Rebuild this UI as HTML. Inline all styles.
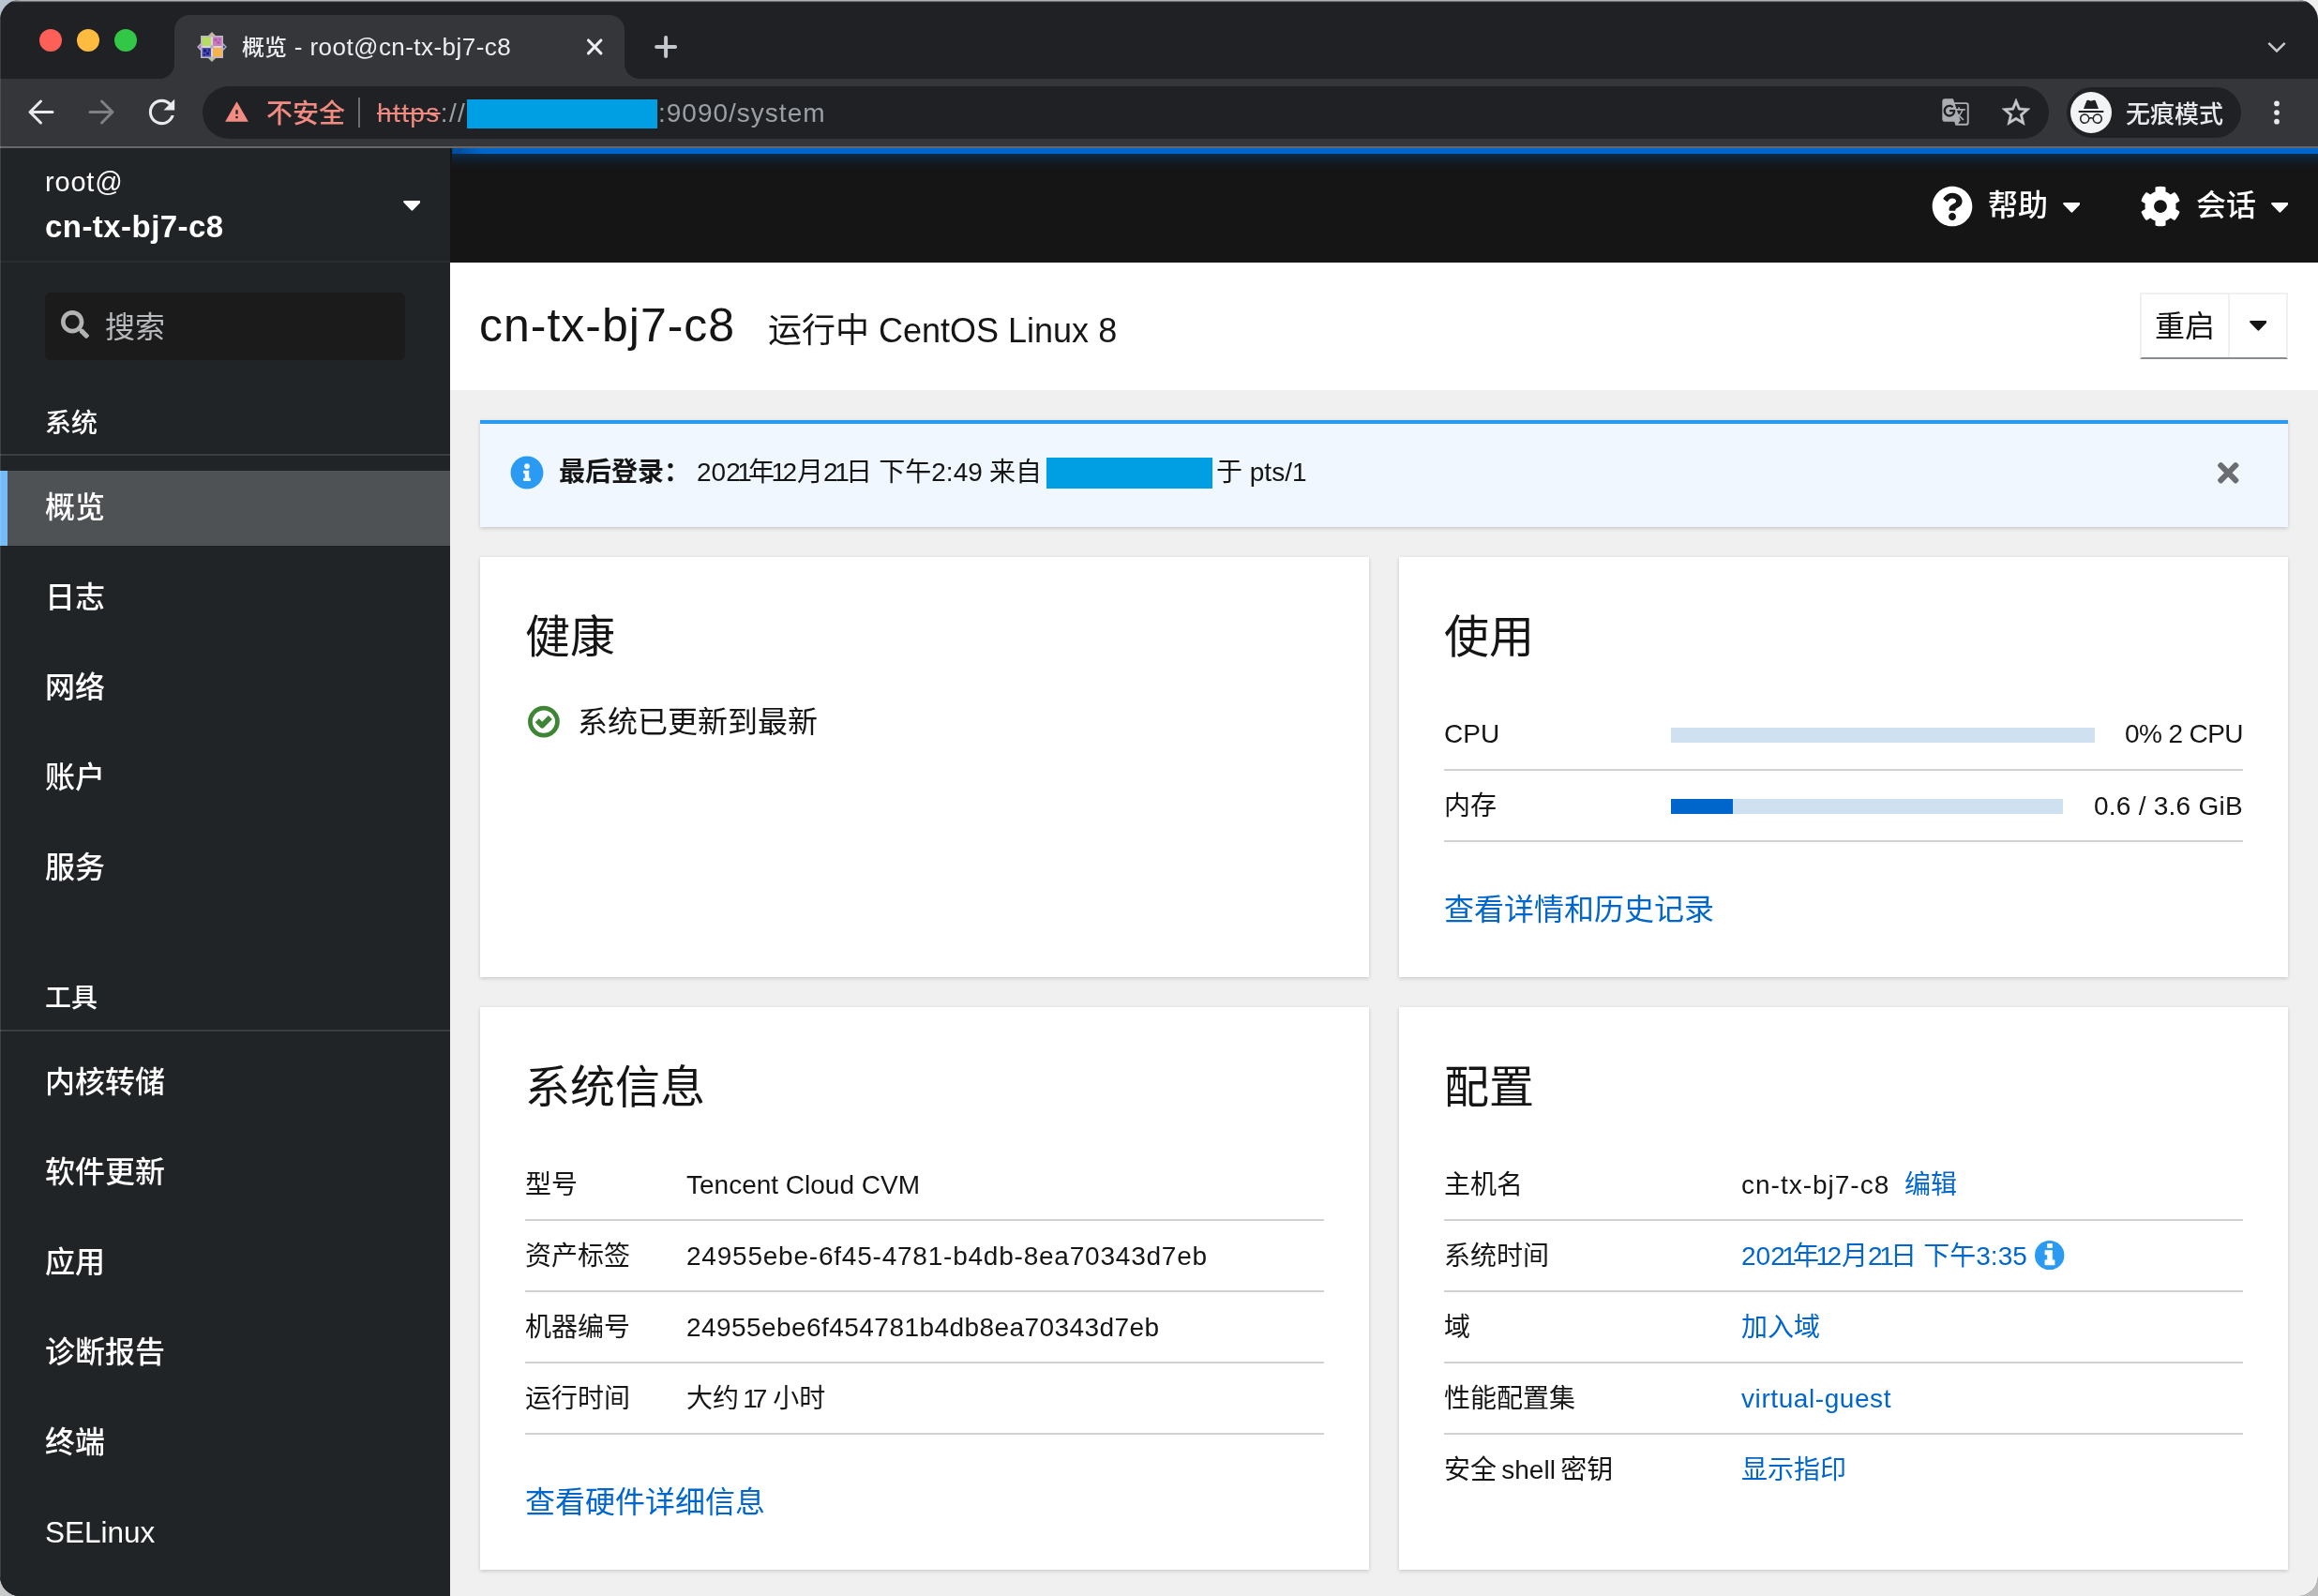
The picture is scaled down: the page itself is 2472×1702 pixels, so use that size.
<!DOCTYPE html>
<html lang="zh-CN">
<head>
<meta charset="utf-8">
<title>概览 - root@cn-tx-bj7-c8</title>
<style>
*{box-sizing:border-box;margin:0;padding:0}
html,body{width:2472px;height:1702px;overflow:hidden}
body{position:relative;background:#c3c6cc;font-family:"Liberation Sans","Noto Sans CJK SC",sans-serif;color:#151515;-webkit-font-smoothing:antialiased}
.abs{position:absolute}
.t{position:absolute;white-space:nowrap;line-height:1;will-change:transform;margin-top:2px}
.c{margin-top:0}
#corner-tl{position:absolute;left:0;top:0;width:60px;height:40px;background:#b9c2d1}
#corner-tr{position:absolute;right:0;top:0;width:60px;height:40px;background:#eeefee}
#corner-br{position:absolute;right:0;bottom:0;width:40px;height:40px;background:#bdbdbd}
#corner-bl{position:absolute;left:0;bottom:0;width:40px;height:40px;background:#c9c9c9}
#win{position:absolute;left:0;top:0;width:2472px;height:1702px;border-radius:21px;overflow:hidden;background:#202124}
#topline{position:absolute;left:0;top:0;width:2472px;height:3px;background:linear-gradient(#afb1b5,#afb1b5 .7px,#5a5b5f 1.700px,#202124 2.600px)}
/* ---------- browser chrome ---------- */
#tab{position:absolute;left:186px;top:16px;width:480px;height:68px;background:#35363a;border-radius:16px 16px 0 0}
#tab:before,#tab:after{content:"";position:absolute;bottom:0;width:16px;height:16px}
#tab:before{left:-16px;background:radial-gradient(circle at 0 0,rgba(53,54,58,0) 15.5px,#35363a 16.5px)}
#tab:after{right:-16px;background:radial-gradient(circle at 100% 0,rgba(53,54,58,0) 15.5px,#35363a 16.5px)}
#toolbar{position:absolute;left:0;top:84px;width:2472px;height:72px;background:#35363a}
#tbline{position:absolute;left:0;top:156px;width:2472px;height:2px;background:#66676b}
#omni{position:absolute;left:216px;top:92px;width:1969px;height:56px;border-radius:28px;background:#202124}
#incog{position:absolute;left:2204px;top:93px;width:186px;height:54px;border-radius:27px;background:#202124}
/* ---------- cockpit ---------- */
#side{position:absolute;left:0;top:158px;width:480px;height:1544px;background:#212427}
#mast{position:absolute;left:480px;top:158px;width:1992px;height:122px;background:#151515}
#main{position:absolute;left:480px;top:280px;width:1992px;height:1422px;background:#f0f0f0}
.nav{color:#fff;font-size:32px;left:48px;font-weight:500;margin-top:1px}
.sec{color:#fff;font-size:28px;left:48px;font-weight:500}
.card{position:absolute;background:#fff;box-shadow:0 2px 4px rgba(3,3,3,.12),0 0 4px rgba(3,3,3,.06)}
.ct{font-size:48px;color:#151515;margin-top:4px}
.lb{font-size:28px;color:#151515}
.lk{color:#0066cc}
.n{letter-spacing:-1.6px}
.o{margin-left:-3.500px;letter-spacing:-3.700px}
.dv{position:absolute;height:2px;background:#d2d2d2}
.hr{position:absolute;left:0;width:480px;height:2px;background:#3c3f42}
</style>
</head>
<body>
<div id="corner-tl"></div><div id="corner-tr"></div><div id="corner-br"></div><div id="corner-bl"></div>
<div id="win">
<div id="topline"></div>
<div class="abs" style="left:0;top:20px;width:1px;height:1662px;background:rgba(255,255,255,.13);z-index:5"></div>
<!--CHROME-->
<!-- traffic lights -->
<div class="abs" style="left:42px;top:31px;width:24px;height:24px;border-radius:50%;background:#fe5f57"></div>
<div class="abs" style="left:82px;top:31px;width:24px;height:24px;border-radius:50%;background:#fdbb40"></div>
<div class="abs" style="left:122px;top:31px;width:24px;height:24px;border-radius:50%;background:#33c748"></div>
<!-- tab -->
<div id="tab"></div>
<svg class="abs" style="left:210px;top:34px" width="32" height="32" viewBox="0 0 32 32">
 <path d="M16 0l5 5H11zM16 32l5-5H11zM0 16l5-5v10zM32 16l-5-5v10z" fill="#b9b3c1"/>
 <path d="M16 1.500l2.500 3.500h-5z" fill="#f6b348"/><path d="M16 30.500l2.500-3.500h-5z" fill="#b4dc5e"/>
 <path d="M1.500 16l3.500-2.500v5z" fill="#c668bd"/><path d="M30.500 16l-3.500-2.500v5z" fill="#3c3f9a"/>
 <rect x="4" y="4" width="24" height="24" fill="#bdb6c6"/>
 <rect x="5.500" y="5.500" width="9.500" height="9.500" fill="#b6de62"/>
 <rect x="17" y="5.500" width="9.500" height="9.500" fill="#c77cc0"/>
 <rect x="5.500" y="17" width="9.500" height="9.500" fill="#4d4fae"/>
 <rect x="17" y="17" width="9.500" height="9.500" fill="#f6b348"/>
 <path d="M7 18.500h3v3H7zM10 21.500h3v3h-3zM12 18.500h2v2h-2zM7 23.500h2v2H7z" fill="#1c1c80"/>
 <path d="M18.500 7h3v3h-3zM21.500 10h3v3h-3zM23.500 7h2v2h-2z" fill="#b25ba8"/>
 <path d="M15 5.500h2v21h-2zM5.500 15h21v2h-21z" fill="#d8d2e2"/>
 <rect x="14.500" y="14.500" width="3" height="3" fill="#b0aeb4"/>
</svg>
<div class="t c" id="tabtitle" style="left:258px;top:37px;font-size:24px;font-weight:500;color:#eceef0">概览<span style="font-size:26px;letter-spacing:.45px"> - root@cn-tx-bj7-c8</span></div>
<svg class="abs" style="left:618px;top:34px" width="32" height="32" viewBox="0 0 32 32"><path fill="none" stroke="#eceef0" stroke-width="3.100" stroke-linecap="round" d="M9.500 9l13.400 13.800M22.900 9L9.500 22.800"/></svg>
<svg class="abs" style="left:690px;top:30px" width="40" height="40" viewBox="0 0 40 40"><path fill="none" stroke="#c4c7cb" stroke-width="4" stroke-linecap="round" d="M20.100 10.100v20M10.100 20.100h20"/></svg>
<svg class="abs" style="left:2410px;top:32px" width="36" height="36" viewBox="0 0 24 24"><path fill="none" stroke="#c4c7cb" stroke-width="1.7" d="M6.2 9.2l5.8 5.8 5.8-5.8"/></svg>
<!-- toolbar -->
<div id="toolbar"></div><div id="tbline"></div>
<svg class="abs" style="left:24px;top:100px" width="40" height="40" viewBox="0 0 40 40"><path fill="none" stroke="#e8eaed" stroke-width="3" stroke-linecap="round" stroke-linejoin="round" d="M32 19.500H8.500M19.500 8L8 19.500 19.500 31"/></svg>
<svg class="abs" style="left:88px;top:100px" width="40" height="40" viewBox="0 0 40 40"><path fill="none" stroke="#7f8185" stroke-width="3" stroke-linecap="round" stroke-linejoin="round" d="M8 19.500h23.500M20.500 8L32 19.500 20.500 31"/></svg>
<svg class="abs" style="left:152px;top:99px" width="41" height="41" viewBox="0 0 24 24"><path fill="#e8eaed" d="M17.650 6.350A7.950 7.950 0 0 0 12 4c-4.420 0-7.990 3.580-7.990 8s3.570 8 7.990 8c3.730 0 6.840-2.550 7.730-6h-1.900c-.85 2.450-3.100 4.200-5.830 4.200-3.420 0-6.200-2.780-6.200-6.200s2.780-6.200 6.200-6.200c1.700 0 3.230.7 4.350 1.850L13.200 10.800H20V4z"/></svg>
<div id="omni"></div>
<svg class="abs" style="left:239px;top:106px" width="27" height="27" viewBox="0 0 24 24"><path fill="#f28b82" d="M1 21h22L12 2 1 21zm12-3h-2v-2h2v2zm0-4h-2v-4h2v4z"/></svg>
<div class="t c" id="insecure" style="left:284px;top:108px;font-size:28px;font-weight:500;color:#f28b82">不安全</div>
<div class="abs" style="left:382px;top:104px;width:2px;height:32px;background:#6b6d71"></div>
<div class="t c" id="url1" style="left:402px;top:107px;font-size:28px;color:#9aa0a6;letter-spacing:1.400px"><span style="color:#f28b82;text-decoration:line-through">https</span>://</div>
<div class="t c" id="url2" style="left:702px;top:107px;font-size:28px;color:#9aa0a6;letter-spacing:1px">:9090/system</div>
<div class="abs" style="left:498px;top:106px;width:203px;height:31px;background:#009fe3"></div>
<!-- translate icon -->
<svg class="abs" style="left:2070px;top:104px" width="31" height="31" viewBox="0 0 24 24"><path fill="#aaadb1" d="M21 4H11l-1-3H3c-1.100 0-2 .9-2 2v15c0 1.100.9 2 2 2h8l1 3h9c1.100 0 2-.9 2-2V6c0-1.100-.9-2-2-2zM7 16c-2.760 0-5-2.240-5-5s2.240-5 5-5c1.350 0 2.480.5 3.350 1.300L9.030 8.570c-.38-.36-1.040-.78-2.030-.78-1.740 0-3.150 1.440-3.150 3.210S5.260 14.210 7 14.210c2.010 0 2.840-1.440 2.920-2.410H7v-1.710h4.680c.07.31.12.61.12 1.020C11.800 13.970 9.890 16 7 16zm6.170-5.420h3.700c-.43 1.250-1.110 2.430-2.050 3.470-.31-.35-.6-.72-.86-1.100l-.79-2.370zm8.330 9.920c0 .55-.45 1-1 1H14l2-2.500-1.040-3.100 3.100 3.100.92-.92-3.300-3.250.02-.02c1.130-1.250 1.930-2.690 2.400-4.220H20v-1.300h-4.530V8h-1.290v1.290h-1.440L11.460 5.500h9.040c.55 0 1 .45 1 1v14z"/></svg>
<!-- star -->
<svg class="abs" style="left:2132px;top:102px" width="36" height="36" viewBox="0 0 24 24"><path fill="#c4c7cb" stroke="#c4c7cb" stroke-width=".3" d="M22 9.240l-7.190-.62L12 2 9.190 8.630 2 9.240l5.460 4.730L5.820 21 12 17.270 18.180 21l-1.630-7.030L22 9.240zM12 15.400l-3.760 2.270 1-4.280-3.320-2.880 4.380-.38L12 6.100l1.710 4.040 4.380.38-3.320 2.880 1 4.280L12 15.400z"/></svg>
<!-- incognito chip -->
<div id="incog"></div>
<div class="abs" style="left:2208px;top:98px;width:44px;height:44px;border-radius:50%;background:#f1f3f4"></div>
<svg class="abs" style="left:2214px;top:104px" width="32" height="32" viewBox="0 0 24 24"><path fill="#202124" d="M17.060 13c-1.860 0-3.420 1.330-3.820 3.100-.95-.41-1.820-.3-2.480-.01C10.350 14.310 8.790 13 6.940 13 4.770 13 3 14.790 3 17s1.770 4 3.940 4c2.060 0 3.740-1.620 3.900-3.680.34-.24 1.230-.69 2.320.02.18 2.050 1.840 3.660 3.900 3.660 2.170 0 3.940-1.790 3.940-4s-1.770-4-3.940-4zM6.940 19.860c-1.560 0-2.810-1.280-2.810-2.860s1.260-2.860 2.810-2.860c1.560 0 2.810 1.280 2.810 2.860s-1.250 2.860-2.810 2.860zm10.120 0c-1.560 0-2.810-1.280-2.810-2.860s1.250-2.860 2.810-2.860 2.820 1.280 2.820 2.860-1.270 2.860-2.820 2.860zM22 10.500H2V12h20v-1.500zm-6.470-7.870c-.22-.49-.78-.75-1.310-.58L12 2.790l-2.230-.74-.05-.01c-.53-.15-1.090.13-1.290.64L6 9h12l-2.440-6.320-.03-.05z"/></svg>
<div class="t c" id="incogt" style="left:2267px;top:109px;font-size:26px;font-weight:500;color:#e8eaed">无痕模式</div>
<svg class="abs" style="left:2406px;top:98px" width="44" height="44" viewBox="0 0 24 24"><g fill="#e8eaed"><circle cx="12" cy="6.750" r="1.550"/><circle cx="12" cy="12" r="1.550"/><circle cx="12" cy="17.250" r="1.550"/></g></svg>
<!--/CHROME-->
<!--SIDEBAR-->
<div id="side"></div>
<div class="abs" style="left:0;top:278px;width:480px;height:2px;background:#2a2d30"></div>
<div class="t" id="hs1" style="left:48px;top:178px;font-size:29px;letter-spacing:.8px;color:#fff">root@</div>
<div class="t" id="hs2" style="left:48px;top:223px;font-size:33px;letter-spacing:.45px;font-weight:bold;color:#fff">cn-tx-bj7-c8</div>
<svg class="abs" style="left:429.500px;top:213.600px" width="18.800" height="11" viewBox="0 0 20 12" preserveAspectRatio="none"><path fill="#fff" d="M1.500 0h17c1.200 0 1.800 1.400.9 2.300l-8.500 9c-.5.500-1.300.500-1.800 0l-8.500-9C-.3 1.400.3 0 1.500 0z"/></svg>
<div class="abs" style="left:48px;top:312px;width:384px;height:72px;border-radius:6px;background:#1b1b1b"></div>
<svg class="abs" style="left:65px;top:331px" width="30" height="30" viewBox="0 0 512 512"><path fill="#b1b3b5" d="M505 442.700L405.300 343c-4.500-4.500-10.600-7-17-7H372c27.600-35.300 44-79.700 44-128C416 93.100 322.900 0 208 0S0 93.100 0 208s93.100 208 208 208c48.300 0 92.700-16.400 128-44v16.300c0 6.400 2.500 12.500 7 17l99.700 99.700c9.400 9.400 24.600 9.400 33.900 0l28.300-28.300c9.400-9.400 9.400-24.600.1-34zM208 336c-70.700 0-128-57.200-128-128 0-70.700 57.200-128 128-128 70.700 0 128 57.200 128 128 0 70.700-57.200 128-128 128z"/></svg>
<div class="t" style="left:112px;top:331px;font-size:32px;color:#b8bbbe">搜索</div>
<div class="t sec" style="top:436px">系统</div>
<div class="hr" style="top:484px"></div>
<div class="abs" style="left:0;top:502px;width:480px;height:80px;background:#4f5255"></div>
<div class="abs" style="left:0;top:502px;width:8px;height:80px;background:#73bcf7"></div>
<div class="t nav" style="top:524px">概览</div>
<div class="t nav" style="top:620px">日志</div>
<div class="t nav" style="top:716px">网络</div>
<div class="t nav" style="top:812px">账户</div>
<div class="t nav" style="top:908px">服务</div>
<div class="t sec" style="top:1049px">工具</div>
<div class="hr" style="top:1098px"></div>
<div class="t nav" style="top:1137px">内核转储</div>
<div class="t nav" style="top:1233px">软件更新</div>
<div class="t nav" style="top:1329px">应用</div>
<div class="t nav" style="top:1425px">诊断报告</div>
<div class="t nav" style="top:1521px">终端</div>
<div class="t nav" id="selinux" style="top:1618px;font-size:31.500px">SELinux</div>
<!--/SIDEBAR-->
<!--MAST-->
<div id="mast"></div>
<div class="abs" style="left:482px;top:158px;width:1990px;height:22px;background:linear-gradient(#0066cc 0,#0066cc 6px,rgba(0,70,140,.42) 6.500px,rgba(0,60,120,.25) 12px,rgba(0,40,90,0) 21px)"></div>
<div class="abs" style="left:482px;top:158px;width:34px;height:6px;background:linear-gradient(90deg,#004a94,#0066cc)"></div>
<svg class="abs" style="left:2060px;top:198px" width="44" height="44" viewBox="0 0 512 512"><path fill="#fff" d="M504 256c0 136.997-111.043 248-248 248S8 392.997 8 256C8 119.083 119.043 8 256 8s248 111.083 248 248zM262.655 90c-54.497 0-89.255 22.957-116.549 63.758-3.536 5.286-2.353 12.415 2.715 16.258l34.699 26.310c5.205 3.947 12.621 3.008 16.665-2.122 17.864-22.658 30.113-35.797 57.303-35.797 20.429 0 45.698 13.148 45.698 32.958 0 14.976-12.363 22.667-32.534 33.976C247.128 238.528 216 254.941 216 296v4c0 6.627 5.373 12 12 12h56c6.627 0 12-5.373 12-12v-1.333c0-28.462 83.186-29.647 83.186-106.667 0-58.002-60.165-102-116.531-102zM256 338c-25.365 0-46 20.635-46 46 0 25.364 20.635 46 46 46s46-20.636 46-46c0-25.365-20.635-46-46-46z"/></svg>
<div class="t" style="left:2120px;top:201px;font-size:32px;font-weight:500;color:#fff">帮助</div>
<svg class="abs" style="left:2199.700px;top:215.600px" width="18.800" height="11" viewBox="0 0 20 12" preserveAspectRatio="none"><path fill="#fff" d="M1.500 0h17c1.200 0 1.800 1.400.9 2.300l-8.500 9c-.5.500-1.300.500-1.800 0l-8.500-9C-.3 1.400.3 0 1.500 0z"/></svg>
<svg class="abs" style="left:2282px;top:198px" width="44" height="44" viewBox="0 0 512 512"><path fill="#fff" d="M487.400 315.700l-42.600-24.600c4.300-23.200 4.300-47 0-70.200l42.600-24.600c4.900-2.800 7.100-8.600 5.500-14-11.100-35.600-30-67.800-54.700-94.600-3.800-4.100-10-5.100-14.800-2.300L380.800 110c-17.900-15.400-38.500-27.300-60.800-35.100V25.800c0-5.600-3.900-10.500-9.400-11.700-36.700-8.200-74.300-7.800-109.200 0-5.500 1.200-9.400 6.100-9.400 11.700V75c-22.200 7.900-42.800 19.800-60.800 35.100L88.700 85.500c-4.900-2.800-11-1.900-14.800 2.300-24.700 26.700-43.600 58.900-54.700 94.600-1.700 5.400.6 11.200 5.500 14L67.300 221c-4.300 23.200-4.300 47 0 70.200l-42.600 24.600c-4.900 2.800-7.100 8.600-5.500 14 11.100 35.600 30 67.800 54.700 94.600 3.800 4.100 10 5.100 14.800 2.300l42.600-24.600c17.900 15.400 38.500 27.300 60.800 35.100v49.200c0 5.600 3.900 10.500 9.400 11.700 36.700 8.200 74.300 7.800 109.200 0 5.500-1.200 9.400-6.100 9.400-11.700v-49.200c22.200-7.900 42.800-19.800 60.800-35.100l42.600 24.600c4.900 2.800 11 1.900 14.800-2.300 24.700-26.700 43.600-58.900 54.700-94.600 1.500-5.500-.7-11.300-5.600-14.100zM256 336c-44.100 0-80-35.900-80-80s35.900-80 80-80 80 35.900 80 80-35.900 80-80 80z"/></svg>
<div class="t" style="left:2342px;top:201px;font-size:32px;font-weight:500;color:#fff">会话</div>
<svg class="abs" style="left:2421.500px;top:215.600px" width="18.800" height="11" viewBox="0 0 20 12" preserveAspectRatio="none"><path fill="#fff" d="M1.500 0h17c1.200 0 1.800 1.400.9 2.300l-8.500 9c-.5.500-1.300.500-1.800 0l-8.500-9C-.3 1.400.3 0 1.500 0z"/></svg>
<!--/MAST-->
<!--MAIN-->
<div id="main"></div>
<div class="abs" style="left:480px;top:280px;width:1992px;height:136px;background:#fff"></div>
<div class="t" id="h1" style="left:511px;top:320px;font-size:50px;letter-spacing:1px;color:#151515">cn-tx-bj7-c8</div>
<div class="t" id="h2" style="left:819px;top:333px;font-size:36px;color:#151515">运行中 CentOS Linux 8</div>
<!-- restart button -->
<div class="abs" style="left:2282px;top:312px;width:158px;height:71px;background:#fff;border:2px solid #f0f0f0;border-bottom:2px solid #8a8d90"></div>
<div class="abs" style="left:2376px;top:312px;width:2px;height:69px;background:#f0f0f0"></div>
<div class="t" style="left:2298px;top:330px;font-size:32px;color:#151515">重启</div>
<svg class="abs" style="left:2398.600px;top:341.700px" width="18.800" height="11" viewBox="0 0 20 12" preserveAspectRatio="none"><path fill="#151515" d="M1.500 0h17c1.200 0 1.800 1.400.9 2.300l-8.500 9c-.5.500-1.300.500-1.800 0l-8.500-9C-.3 1.400.3 0 1.500 0z"/></svg>
<!-- alert -->
<div class="abs" style="left:512px;top:448px;width:1928px;height:114px;background:#f0f7fe;border-top:4px solid #2b9af3;box-shadow:0 2px 4px rgba(3,3,3,.12),0 0 4px rgba(3,3,3,.06)"></div>
<svg class="abs" style="left:544px;top:486px" width="36" height="36" viewBox="0 0 512 512"><path fill="#2b9af3" d="M256 8C119.043 8 8 119.083 8 256c0 136.997 111.043 248 248 248s248-111.003 248-248C504 119.083 392.957 8 256 8zm0 110c23.196 0 42 18.804 42 42s-18.804 42-42 42-42-18.804-42-42 18.804-42 42-42zm56 254c0 6.627-5.373 12-12 12h-88c-6.627 0-12-5.373-12-12v-24c0-6.627 5.373-12 12-12h12v-64h-12c-6.627 0-12-5.373-12-12v-24c0-6.627 5.373-12 12-12h64c6.627 0 12 5.373 12 12v100h12c6.627 0 12 5.373 12 12v24z"/></svg>
<div class="t" id="al1" style="left:596px;top:488px;font-size:28px;font-weight:bold;color:#151515">最后登录：</div>
<div class="t" id="al2" style="left:743px;top:488px;font-size:28px;color:#151515;word-spacing:-.5px">202<span class="o">1</span>年<span class="o">1</span>2月2<span class="o">1</span>日 下午2:49 来自</div>
<div class="abs" style="left:1116px;top:488px;width:177px;height:33px;background:#009fe3"></div>
<div class="t" id="al3" style="left:1297px;top:488px;font-size:28px;color:#151515">于 pts/1</div>
<svg class="abs" style="left:2365px;top:493px" width="22.500" height="22.500" viewBox="0 80 352 352"><path fill="#6a6e73" d="M242.720 256l100.070-100.070c12.280-12.280 12.280-32.190 0-44.480l-22.240-22.240c-12.280-12.280-32.190-12.280-44.480 0L176 189.280 75.930 89.210c-12.280-12.280-32.190-12.280-44.480 0L9.210 111.450c-12.280 12.280-12.280 32.190 0 44.480L109.280 256 9.210 356.070c-12.280 12.280-12.280 32.190 0 44.480l22.240 22.240c12.280 12.280 32.200 12.280 44.480 0L176 322.720l100.070 100.070c12.280 12.280 32.200 12.280 44.480 0l22.240-22.240c12.280-12.280 12.280-32.190 0-44.480L242.720 256z"/></svg>
<!-- cards -->
<div class="card" style="left:512px;top:594px;width:948px;height:448px"></div>
<div class="card" style="left:1492px;top:594px;width:948px;height:448px"></div>
<div class="card" style="left:512px;top:1074px;width:948px;height:600px"></div>
<div class="card" style="left:1492px;top:1074px;width:948px;height:600px"></div>
<!-- card 1 -->
<div class="t ct" style="left:560px;top:652px">健康</div>
<svg class="abs" style="left:562px;top:752px" width="36" height="36" viewBox="0 0 36 36"><circle cx="17.900" cy="17.600" r="14.500" fill="none" stroke="#3e8635" stroke-width="4.800"/><path d="M10.750 16.250L16.200 21.700 24.850 13.050" fill="none" stroke="#3e8635" stroke-width="5.800" stroke-linejoin="round"/></svg>
<div class="t" style="left:616px;top:752px;font-size:32px">系统已更新到最新</div>
<!-- card 2 -->
<div class="t ct" style="left:1540px;top:652px">使用</div>
<div class="t lb" id="cpu" style="left:1540px;top:767px">CPU</div>
<div class="abs" style="left:1782px;top:776px;width:452px;height:16px;background:#cfe0f0"></div>
<div class="t lb" id="cpuv" style="right:80px;top:767px;letter-spacing:-.6px">0% 2 CPU</div>
<div class="dv" style="left:1540px;top:820px;width:852px"></div>
<div class="t lb" style="left:1540px;top:844px">内存</div>
<div class="abs" style="left:1782px;top:852px;width:418px;height:16px;background:#cfe0f0"></div>
<div class="abs" style="left:1782px;top:852px;width:66px;height:16px;background:#0066cc"></div>
<div class="t lb" id="memv" style="right:80px;top:844px;letter-spacing:.25px">0.6 / 3.6 GiB</div>
<div class="dv" style="left:1540px;top:896px;width:852px"></div>
<div class="t lk" style="left:1540px;top:952px;font-size:32px">查看详情和历史记录</div>
<!-- card 3 -->
<div class="t ct" style="left:560px;top:1132px">系统信息</div>
<div class="t lb" style="left:560px;top:1248px">型号</div><div class="t lb" id="v1" style="left:732px;top:1248px">Tencent Cloud CVM</div>
<div class="dv" style="left:560px;top:1300px;width:852px"></div>
<div class="t lb" style="left:560px;top:1324px">资产标签</div><div class="t lb" id="v2" style="left:732px;top:1324px;letter-spacing:.78px">24955ebe-6f45-4781-b4db-8ea70343d7eb</div>
<div class="dv" style="left:560px;top:1376px;width:852px"></div>
<div class="t lb" style="left:560px;top:1400px">机器编号</div><div class="t lb" id="v3" style="left:732px;top:1400px;letter-spacing:.44px">24955ebe6f454781b4db8ea70343d7eb</div>
<div class="dv" style="left:560px;top:1452px;width:852px"></div>
<div class="t lb" style="left:560px;top:1476px">运行时间</div><div class="t lb" id="v4" style="left:732px;top:1476px;word-spacing:-2px">大约 <span style="margin-left:-1.500px;letter-spacing:-5px">1</span>7 小时</div>
<div class="dv" style="left:560px;top:1528px;width:852px"></div>
<div class="t lk" style="left:560px;top:1584px;font-size:32px">查看硬件详细信息</div>
<!-- card 4 -->
<div class="t ct" style="left:1540px;top:1132px">配置</div>
<div class="t lb" style="left:1540px;top:1248px">主机名</div><div class="t lb" id="c1" style="left:1857px;top:1248px;letter-spacing:1px">cn-tx-bj7-c8</div><div class="t lb lk" style="left:2031px;top:1248px">编辑</div>
<div class="dv" style="left:1540px;top:1300px;width:852px"></div>
<div class="t lb" style="left:1540px;top:1324px">系统时间</div><div class="t lb lk" id="c2" style="left:1857px;top:1324px;word-spacing:-.5px">202<span class="o">1</span>年<span class="o">1</span>2月2<span class="o">1</span>日 下午3:35</div>
<svg class="abs" style="left:2170.300px;top:1323px" width="31.400" height="31.400" viewBox="0 0 31.400 31.400"><circle cx="15.700" cy="15.700" r="15.700" fill="#2b9af3"/><rect x="13.100" y="3.100" width="5.800" height="4.800" rx=".9" fill="#fff"/><path d="M10.900 10.500H18.600V20.800H21.100V25.900H10.900V20.800H13.400V15H10.900Z" fill="#fff" stroke="#fff" stroke-width=".6" stroke-linejoin="round"/></svg>
<div class="dv" style="left:1540px;top:1376px;width:852px"></div>
<div class="t lb" style="left:1540px;top:1400px">域</div><div class="t lb lk" style="left:1857px;top:1400px">加入域</div>
<div class="dv" style="left:1540px;top:1452px;width:852px"></div>
<div class="t lb" style="left:1540px;top:1476px">性能配置集</div><div class="t lb lk" id="c4" style="left:1857px;top:1476px;letter-spacing:.58px">virtual-guest</div>
<div class="dv" style="left:1540px;top:1528px;width:852px"></div>
<div class="t lb" id="c5l" style="left:1540px;top:1552px;word-spacing:-2.5px">安全 shell 密钥</div><div class="t lb lk" style="left:1857px;top:1552px">显示指印</div>
<!--/MAIN-->
</div>
</body>
</html>
